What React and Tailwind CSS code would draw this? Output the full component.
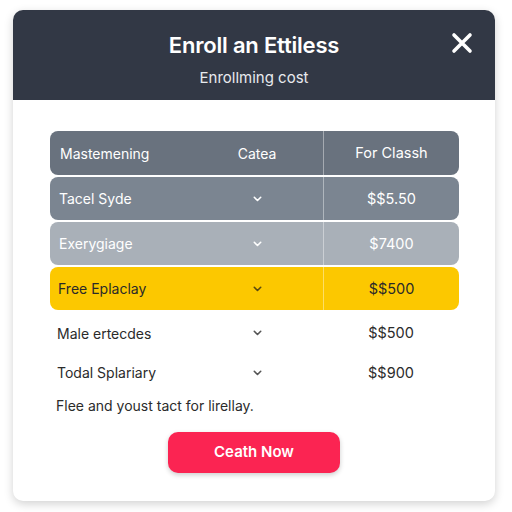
import React from "react";

function Chevron({ className }) {
  return (
    <svg width="9" height="6" viewBox="0 0 9 6" className={className} fill="none">
      <path d="M1.3 1.3 L4.5 4.5 L7.7 1.3" stroke="currentColor" strokeWidth="1.6" strokeLinecap="round" strokeLinejoin="round" />
    </svg>
  );
}

function Row({ bg, text, chev, label, price, h = "h-[43px]", pl = "pl-[9px]", divider = true, rounded = "rounded-lg" }) {
  return (
    <div className={`flex ${h} ${bg} ${rounded} ${text}`}>
      <div className={`flex w-[273px] items-center ${pl}`}>
        <span className="flex-1 text-[14px]">{label}</span>
        <div className="flex w-[132px] items-center justify-center">{chev}</div>
      </div>
      <div className={`flex flex-1 items-center justify-center text-[14.5px] ${divider ? "border-l border-white/40" : ""}`}>
        {price}
      </div>
    </div>
  );
}

export default function App() {
  return (
    <div className="min-h-[512px] w-[512px] bg-white pt-[10px] pl-[13px]" style={{ fontFamily: "Inter, 'Noto Sans', sans-serif" }}>
      <div className="w-[482px] h-[491px] overflow-hidden rounded-[10px] bg-white shadow-[0_3px_10px_rgba(0,0,0,0.18)]">
        <div className="relative flex h-[90px] flex-col items-center bg-[#323845] pt-[22px] text-white">
          <div className="text-[22px] font-semibold leading-[26px] tracking-[-0.2px]">Enroll an Ettiless</div>
          <div className="mt-[11px] text-[15px] leading-[18px] text-[#e8eaee]">Enrollming cost</div>
          <svg className="absolute right-[22px] top-[22px]" width="22" height="22" viewBox="0 0 22 22">
            <path d="M3 3 L19 19 M19 3 L3 19" stroke="white" strokeWidth="3.6" strokeLinecap="round" />
          </svg>
        </div>
        <div className="px-[37px] pt-[31px]">
          <div className="flex w-[409px] flex-col gap-[2px]">
            <Row h="h-[44px]" bg="bg-[#69727e]" text="text-white" label="Mastemening" pl="pl-[10px]" chev={<span className="text-[14px]">Cateа</span>} price="For Classh" />
            <Row bg="bg-[#7b8591]" text="text-white" label="Tacel Syde" chev={<Chevron className="text-white" />} price="$$5.50" />
            <Row bg="bg-[#a9b0b8]" text="text-white" label="Exerygiage" chev={<Chevron className="text-white" />} price="$7400" />
            <Row bg="bg-[#fcc800]" text="text-[#2a2a2a]" label="Free Eplaclay" pl="pl-[8px]" chev={<Chevron className="text-[#5a4a10]" />} price="$$500" />
          </div>
          <div className="mt-[3px] w-[409px]">
            <Row h="h-[40px]" bg="bg-white" text="text-[#2b2b2b]" label="Male ertecdes" pl="pl-[7px]" divider={false} chev={<Chevron className="text-[#555]" />} price="$$500" />
            <Row h="h-[39px]" bg="bg-white" text="text-[#2b2b2b]" label="Todal Splariary" pl="pl-[7px]" divider={false} chev={<Chevron className="text-[#555]" />} price="$$900" />
          </div>
          <div className="mt-[3px] pl-[6px] text-[14px] text-[#2b2b2b]">Flee and youst tact for lirellay.</div>
          <div className="mt-[16px] flex justify-center">
            <button className="h-[41px] w-[172px] rounded-[10px] bg-[#fb2452] text-[15px] font-semibold text-white shadow-[0_2px_5px_rgba(0,0,0,0.2)]">
              Ceath Now
            </button>
          </div>
        </div>
      </div>
    </div>
  );
}
